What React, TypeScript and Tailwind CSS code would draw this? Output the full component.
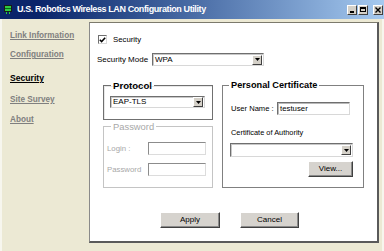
import React from "react";

const font = "font-['Liberation_Sans',Arial,sans-serif]";

function Arrow() {
  return (
    <div className="w-[10px] h-[10px] mr-[1px] bg-[#d4d0c8] border border-t-white border-l-white border-r-[#404040] border-b-[#404040] flex items-center justify-center">
      <svg width="5" height="3" viewBox="0 0 5 3">
        <polygon points="0,0 5,0 2.5,3" fill="#000" />
      </svg>
    </div>
  );
}

function Select({ w, h, text }: { w: string; h: string; text?: string }) {
  return (
    <div className={`${w} ${h} bg-white border border-t-[#6f6f6f] border-l-[#6f6f6f] border-r-[#d8d8d8] border-b-[#d8d8d8] shadow-[inset_1px_1px_0_#c8c8c8] flex items-center`}>
      <div className="flex-1 pl-[2px] text-[8px] leading-[10px] text-black">{text}</div>
      <Arrow />
    </div>
  );
}

function Input({ w, text, disabled }: { w: string; text?: string; disabled?: boolean }) {
  return (
    <div
      className={`${w} h-[13px] bg-white border ${
        disabled
          ? "border-t-[#8c8c8c] border-l-[#8c8c8c] border-r-[#dcdcdc] border-b-[#dcdcdc]"
          : "border-t-[#6f6f6f] border-l-[#6f6f6f] border-r-[#d8d8d8] border-b-[#d8d8d8] shadow-[inset_1px_1px_0_#b8b8b8]"
      } flex items-center pl-[2px] text-[7.8px] leading-[10px] text-black`}
    >
      {text}
    </div>
  );
}

function Button({ w, label }: { w: string; label: string }) {
  return (
    <div className={`${w} h-[16px] bg-[#d6d3ce] border border-t-white border-l-white border-r-[#404040] border-b-[#404040] shadow-[inset_-1px_-1px_0_#8a8a8a] flex items-center justify-center text-[8px] leading-[10px] text-black`}>
      {label}
    </div>
  );
}

export default function App() {
  return (
    <div className={`w-[384px] h-[251px] bg-[#ece9d4] flex flex-col overflow-hidden ${font}`}>
      {/* Title bar */}
      <div className="h-[19px] shrink-0 flex items-center bg-linear-to-r from-[#0a246a] from-10% to-[#a6caf0] pl-[4px] pr-[1px]">
        <svg width="8" height="9" viewBox="0 0 8 9" className="shrink-0">
          <rect x="0" y="0" width="8" height="7" fill="#1a1a1a" />
          <rect x="1" y="1" width="6" height="5" fill="#2ecc40" />
          <rect x="1" y="3" width="6" height="1" fill="#0a6a1a" />
          <rect x="2" y="7" width="1" height="2" fill="#2ecc40" />
          <rect x="5" y="7" width="1" height="2" fill="#2ecc40" />
        </svg>
        <div className="ml-[5px] text-white font-bold text-[9px] tracking-[-0.4px] leading-[11px] whitespace-nowrap">
          U.S. Robotics Wireless LAN Configuration Utility
        </div>
        <div className="ml-auto flex items-center">
          <div className="w-[10px] h-[10px] bg-[#d4d0c8] border border-t-white border-l-white border-r-[#404040] border-b-[#404040] flex items-end justify-center pb-[1px]">
            <div className="w-[4px] h-[2px] bg-black" />
          </div>
          <div className="ml-[1px] w-[10px] h-[10px] bg-[#d4d0c8] border border-t-white border-l-white border-r-[#404040] border-b-[#404040] flex items-center justify-center">
            <div className="w-[6px] h-[5px] border border-black border-t-2" />
          </div>
          <div className="ml-[5px] w-[10px] h-[10px] bg-[#d4d0c8] border border-t-white border-l-white border-r-[#404040] border-b-[#404040] flex items-center justify-center">
            <svg width="6" height="6" viewBox="0 0 6 6">
              <path d="M0.5 0.5 L5.5 5.5 M5.5 0.5 L0.5 5.5" stroke="#000" strokeWidth="1.4" />
            </svg>
          </div>
        </div>
      </div>

      {/* Body */}
      <div className="flex-1 flex border-l-2 border-l-[#f7f6ee] border-r-2 border-r-[#f7f6ee]">
        {/* Nav */}
        <div className="w-[87px] shrink-0 flex flex-col pl-[8px] pt-[12px] text-[8.2px] leading-[10px] font-bold">
          <div className="text-[#7f7f7f] underline">Link Information</div>
          <div className="mt-[9px] text-[#7f7f7f] underline">Configuration</div>
          <div className="mt-[13px] text-black underline text-[8.6px]">Security</div>
          <div className="mt-[12px] text-[#7f7f7f] underline">Site Survey</div>
          <div className="mt-[10px] text-[#7f7f7f] underline">About</div>
        </div>

        {/* Panel */}
        <div className="mt-[3px] w-[290px] h-[221px] bg-white border-t border-l border-t-[#7c7a6c] border-l-[#8a8a8a] border-r-2 border-b-2 border-r-[#5a5a5a] border-b-[#5a5a5a] flex flex-col">
          {/* Security checkbox */}
          <div className="mt-[12px] pl-[8px] flex items-center h-[9px]">
            <div className="w-[9px] h-[9px] bg-white border border-t-[#6f6f6f] border-l-[#6f6f6f] border-r-[#d8d8d8] border-b-[#d8d8d8] flex items-center justify-center">
              <svg width="7" height="6" viewBox="0 0 7 6">
                <path d="M0.8 2.8 L2.6 4.6 L6.2 0.8" stroke="#000" strokeWidth="1.5" fill="none" />
              </svg>
            </div>
            <div className="ml-[6px] text-[7.8px] leading-[10px] text-black">Security</div>
          </div>

          {/* Security mode */}
          <div className="mt-[9px] pl-[7px] flex items-center">
            <div className="w-[55px] text-[8px] leading-[10px] text-black whitespace-nowrap">Security Mode</div>
            <Select w="w-[112px]" h="h-[13px]" text="WPA" />
          </div>

          {/* Groups */}
          <div className="mt-[14px] pl-[13px] flex">
            <div className="w-[110px] flex flex-col">
              <fieldset className="h-[40px] border border-[#707070] shadow-[inset_1px_1px_0_#e8e8e8]">
                <legend className="ml-[7px] px-[2px] text-[9.6px] leading-[11px] font-bold text-black">Protocol</legend>
                <div className="mt-[5px] ml-[6px]">
                  <Select w="w-[95px]" h="h-[12px]" text="EAP-TLS" />
                </div>
              </fieldset>
              <fieldset className="mt-[1px] h-[67px] border border-[#c4c4c4]">
                <legend className="ml-[7px] px-[2px] text-[9.4px] leading-[11px] text-[#a8a8a8]">Password</legend>
                <div className="mt-[10px] pl-[3px] flex items-center">
                  <div className="w-[41px] text-[7.8px] leading-[10px] text-[#a8a8a8]">Login :</div>
                  <Input w="w-[58px]" disabled />
                </div>
                <div className="mt-[8px] pl-[3px] flex items-center">
                  <div className="w-[41px] text-[7.8px] leading-[10px] text-[#a8a8a8]">Password</div>
                  <Input w="w-[58px]" disabled />
                </div>
              </fieldset>
            </div>

            <fieldset className="ml-[9px] w-[142px] h-[108px] border border-[#808080]">
              <legend className="ml-[6px] px-[2px] text-[9.2px] leading-[11px] font-bold text-black whitespace-nowrap">Personal Certificate</legend>
              <div className="mt-[11px] pl-[8px] flex items-center">
                <div className="w-[46px] text-[7.6px] leading-[10px] text-black whitespace-nowrap">User Name :</div>
                <Input w="w-[73px]" text="testuser" />
              </div>
              <div className="mt-[13px] pl-[8px] text-[7.4px] leading-[10px] text-black whitespace-nowrap">Certificate of Authority</div>
              <div className="mt-[5px] ml-[7px]">
                <Select w="w-[123px]" h="h-[14px]" />
              </div>
              <div className="mt-[4px] ml-[85px]">
                <Button w="w-[45px]" label="View..." />
              </div>
            </fieldset>
          </div>

          {/* Action buttons */}
          <div className="mt-[24px] pl-[70px] flex">
            <Button w="w-[60px]" label="Apply" />
            <div className="ml-[20px]">
              <Button w="w-[59px]" label="Cancel" />
            </div>
          </div>
        </div>
      </div>
    </div>
  );
}
